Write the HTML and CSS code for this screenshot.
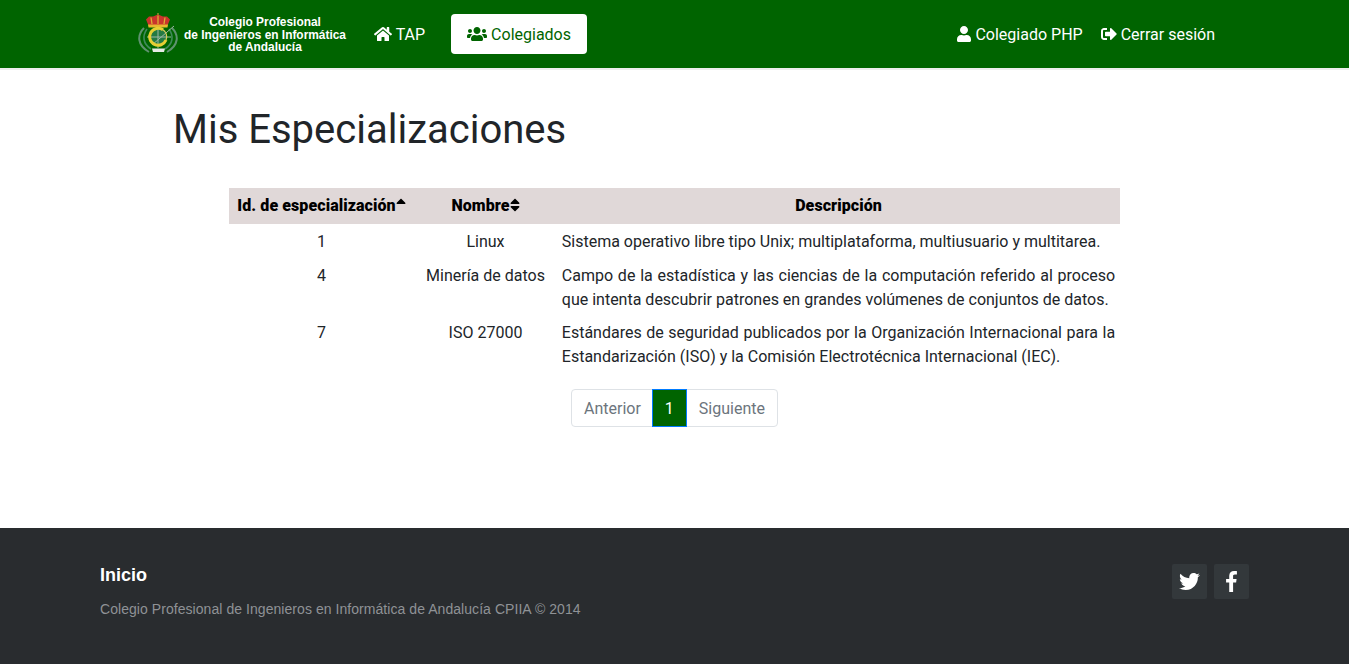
FILE: index.html
```html
<!DOCTYPE html>
<html lang="es">
<head>
<meta charset="utf-8">
<title>Mis Especializaciones</title>
<link rel="stylesheet" href="styles.css">
</head>
<body>
<header class="topbar">
  <div class="topbar-inner">
    <a class="brand" href="#">
      <svg class="crest" viewBox="0 0 40 42" aria-hidden="true">
        <g fill="none" stroke="#5f9270" stroke-width="2">
          <path d="M6 15C-1 22 -1 32 11 39"/>
          <path d="M34 15C41 22 41 32 29 39"/>
        </g>
        <g fill="none" stroke="#3f8a5a" stroke-width="1.600">
          <path d="M9 16C4 23 5 31 13 36"/>
          <path d="M31 16C36 23 35 31 27 36"/>
        </g>
        <path d="M19.500 0h1v2h-1z" fill="#d8b64a"/>
        <path d="M10.500 12.500 8 6.500 11 3.500 15 3.500 20 1.500 25 3.500 29 3.500 32 6.500 29.500 12.500Z" fill="#c9342c"/>
        <path d="M10 11.500H30L29.500 14.500H10.500Z" fill="#e8b82e"/>
        <path d="M13 4.500 14 11M20 2.500V11M27 4.500 26 11" stroke="#dcae34" stroke-width="1.300"/>
        <circle cx="20" cy="24" r="9.500" fill="#247a42"/>
        <path d="M9 24H33M20 14V35M14 32 36 13" stroke="#9db6a4" stroke-width="1"/>
        <path d="M25 16.800A8.500 8.500 0 1 0 28 27" fill="none" stroke="#e6cf33" stroke-width="3"/>
        <path d="M25 16.800A8.500 8.500 0 0 1 28 27" fill="none" stroke="#d7cf55" stroke-width="1.300"/>
        <path d="M14 35.500H27L26 39H15Z" fill="#e7ebe6"/>
      </svg>
      <span class="brand-text">Colegio Profesional<br>de Ingenieros en Informática<br>de Andalucía</span>
    </a>
    <nav class="nav nav-main">
      <a class="nav-link" href="#">
        <svg class="ico ico-home" viewBox="0 0 576 512"><path d="M280.37 148.26L96 300.11V464a16 16 0 0 0 16 16l112.06-.29a16 16 0 0 0 15.92-16V368a16 16 0 0 1 16-16h64a16 16 0 0 1 16 16v95.64a16 16 0 0 0 16 16.05L464 480a16 16 0 0 0 16-16V300L295.67 148.26a12.19 12.19 0 0 0-15.3 0zM571.6 251.47L488 182.56V44.05a12 12 0 0 0-12-12h-56a12 12 0 0 0-12 12v72.61L318.47 43a48 48 0 0 0-61 0L4.34 251.47a12 12 0 0 0-1.6 16.9l25.5 31A12 12 0 0 0 45.15 301l235.22-193.74a12.19 12.19 0 0 1 15.3 0L530.9 301a12 12 0 0 0 16.9-1.6l25.5-31a12 12 0 0 0-1.7-16.93z"/></svg>
        TAP
      </a>
      <a class="nav-link is-active" href="#">
        <svg class="ico ico-users" viewBox="0 0 640 512"><path d="M96 224c35.3 0 64-28.7 64-64s-28.7-64-64-64-64 28.7-64 64 28.7 64 64 64zm448 0c35.3 0 64-28.7 64-64s-28.7-64-64-64-64 28.7-64 64 28.7 64 64 64zm32 32h-64c-17.6 0-33.5 7.1-45.1 18.6 40.3 22.1 68.9 62 75.1 109.4h66c17.7 0 32-14.3 32-32v-32c0-35.3-28.7-64-64-64zm-256 0c61.9 0 112-50.1 112-112S381.9 32 320 32 208 82.1 208 144s50.1 112 112 112zm76.8 32h-8.3c-20.8 10-43.9 16-68.5 16s-47.6-6-68.5-16h-8.3C179.6 288 128 339.6 128 403.2V432c0 26.5 21.5 48 48 48h288c26.5 0 48-21.5 48-48v-28.8c0-63.6-51.6-115.2-115.2-115.2zm-223.7-13.4C161.5 263.1 145.6 256 128 256H64c-35.3 0-64 28.7-64 64v32c0 17.7 14.3 32 32 32h65.900c6.300-47.400 34.900-87.300 75.200-109.400z"/></svg>
        Colegiados
      </a>
    </nav>
    <nav class="nav nav-user">
      <a class="nav-link" href="#">
        <svg class="ico ico-user" viewBox="0 0 448 512"><path d="M224 256c70.700 0 128-57.300 128-128S294.700 0 224 0 96 57.300 96 128s57.300 128 128 128zm89.600 32h-16.700c-22.200 10.200-46.900 16-72.900 16s-50.600-5.800-72.900-16h-16.700C60.200 288 0 348.200 0 422.400V464c0 26.500 21.500 48 48 48h352c26.500 0 48-21.500 48-48v-41.600c0-74.200-60.200-134.400-134.400-134.400z"/></svg>
        Colegiado PHP
      </a>
      <a class="nav-link" href="#">
        <svg class="ico ico-out" viewBox="0 0 512 512"><path d="M497 273L329 441c-15 15-41 4.500-41-17v-96H152c-13.300 0-24-10.700-24-24v-96c0-13.300 10.700-24 24-24h136V88c0-21.400 25.900-32 41-17l168 168c9.300 9.400 9.300 24.600 0 34zM192 436v-40c0-6.600-5.400-12-12-12H96c-17.700 0-32-14.300-32-32V160c0-17.700 14.300-32 32-32h84c6.600 0 12-5.400 12-12V76c0-6.600-5.400-12-12-12H96c-53 0-96 43-96 96v192c0 53 43 96 96 96h84c6.600 0 12-5.400 12-12z"/></svg>
        Cerrar sesión
      </a>
    </nav>
  </div>
</header>

<main class="content">
  <h1 class="page-title">Mis Especializaciones</h1>
  <table class="data-table">
    <colgroup>
      <col class="col-id"><col class="col-name"><col class="col-desc">
    </colgroup>
    <thead>
      <tr>
        <th>Id. de especialización<svg class="sort" viewBox="0 0 320 512"><path d="M279 224H41c-21.400 0-32.100-25.900-17-41L143 64c9.400-9.400 24.600-9.400 33.900 0l119 119c15.200 15.100 4.500 41-16.900 41z"/></svg></th>
        <th>Nombre<svg class="sort" viewBox="0 0 320 512"><path d="M41 288h238c21.400 0 32.100 25.900 17 41l-119 119c-9.400 9.400-24.600 9.400-33.900 0l-119.100-119c-15.100-15.100-4.400-41 17-41zm255-105L177 64c-9.400-9.400-24.600-9.400-33.900 0L24 183c-15.100 15.100-4.400 41 17 41h238c21.400 0 32.100-25.900 17-41z"/></svg></th>
        <th>Descripción</th>
      </tr>
    </thead>
    <tbody>
      <tr>
        <td class="center">1</td>
        <td class="center">Linux</td>
        <td class="just">Sistema operativo libre tipo Unix; multiplataforma, multiusuario y multitarea.</td>
      </tr>
      <tr>
        <td class="center">4</td>
        <td class="center">Minería de datos</td>
        <td class="just">Campo de la estadística y las ciencias de la computación referido al proceso que intenta descubrir patrones en grandes volúmenes de conjuntos de datos.</td>
      </tr>
      <tr>
        <td class="center">7</td>
        <td class="center">ISO 27000</td>
        <td class="just">Estándares de seguridad publicados por la Organización Internacional para la Estandarización (ISO) y la Comisión Electrotécnica Internacional (IEC).</td>
      </tr>
    </tbody>
  </table>
  <div class="pagination">
    <a class="page-link first" href="#">Anterior</a>
    <a class="page-link current" href="#">1</a>
    <a class="page-link last" href="#">Siguiente</a>
  </div>
</main>

<footer class="footer">
  <div class="footer-left">
    <a class="footer-link" href="#">Inicio</a>
    <p class="footer-copy">Colegio Profesional de Ingenieros en Informática de Andalucía CPIIA © 2014</p>
  </div>
  <div class="footer-social">
    <a class="social" href="#"><svg class="ico-tw" viewBox="0 0 512 512"><path d="M459.37 151.716c.325 4.548.325 9.097.325 13.645 0 138.72-105.583 298.558-298.558 298.558-59.452 0-114.68-17.219-161.137-47.106 8.447.974 16.568 1.299 25.34 1.299 49.055 0 94.213-16.568 130.274-44.832-46.132-.975-84.792-31.188-98.112-72.772 6.498.974 12.995 1.624 19.818 1.624 9.421 0 18.843-1.3 27.614-3.573-48.081-9.747-84.143-51.98-84.143-102.985v-1.299c13.969 7.797 30.214 12.67 47.431 13.319-28.264-18.843-46.781-51.005-46.781-87.391 0-19.492 5.197-37.36 14.294-52.954 51.655 63.675 129.3 105.258 216.365 109.807-1.624-7.797-2.599-15.918-2.599-24.04 0-57.828 46.782-104.934 104.934-104.934 30.213 0 57.502 12.67 76.67 33.137 23.715-4.548 46.456-13.32 66.599-25.34-7.798 24.366-24.366 44.833-46.132 57.827 21.117-2.273 41.584-8.122 60.426-16.243-14.292 20.791-32.161 39.308-52.628 54.253z"/></svg></a>
    <a class="social" href="#"><svg class="ico-fb" viewBox="0 0 264 512"><path d="M76.700 512V283H0v-91h76.700v-71.700C76.700 42.400 124.300 0 193.800 0c33.300 0 61.900 2.500 70.200 3.600V85h-48.200c-37.800 0-45.100 18-45.100 44.300V192H256l-11.700 91h-73.600v229"/></svg></a>
  </div>
</footer>
</body>
</html>
```

FILE: styles.css
```css
* { box-sizing: border-box; }

html, body { margin: 0; height: 100%; }

body {
  display: flex;
  flex-direction: column;
  min-height: 664px;
  font-family: Roboto, "Liberation Sans", sans-serif;
  font-size: 16px;
  line-height: 24px;
  color: #212529;
  background: #fff;
  overflow-x: hidden;
}

a { text-decoration: none; }

.topbar {
  flex: none;
  height: 70px;
  background: #006400;
  border-bottom: 2px solid #eeeeee;
}

.topbar-inner {
  display: flex;
  align-items: center;
  height: 68px;
  padding: 0 126px 0 138px;
}

.brand {
  display: flex;
  align-items: center;
  gap: 6px;
  color: #fff;
  margin-right: 12px;
}

.crest { width: 40px; height: 42px; flex: none; }

.brand-text {
  width: 162px;
  padding-top: 2px;
  font-family: "Liberation Sans", Arial, sans-serif;
  font-size: 11.9px;
  line-height: 12.4px;
  font-weight: 700;
  text-align: center;
  white-space: nowrap;
}

.nav { display: flex; align-items: center; }
.nav-main { gap: 10px; }
.nav-user { margin-left: auto; gap: 2px; }
.nav-user .nav-link { padding-left: 8px; padding-right: 8px; }

.nav-link {
  display: block;
  height: 40px;
  padding: 9px 16px 7px;
  color: #fff;
  border-radius: 4px;
  white-space: nowrap;
}

.nav-link.is-active { background: #fff; color: #006400; }

.ico { fill: currentColor; height: 16px; vertical-align: -2px; }
.ico-home { width: 18px; }
.ico-users { width: 20px; }
.ico-user { width: 14px; }
.ico-out { width: 16px; }

.content { flex: 1; padding: 0 229px; }

.page-title {
  margin: 33px 0 31px -56px;
  font-size: 40px;
  line-height: 54px;
  font-weight: 400;
}

.data-table {
  width: 891px;
  border-collapse: collapse;
  table-layout: fixed;
}

.col-id { width: 185px; }
.col-name { width: 143px; }

.data-table th {
  height: 36px;
  padding: 4.8px;
  background: #e0d8d8;
  color: #000;
  font-weight: 900;
  letter-spacing: .08px;
  text-align: center;
  white-space: nowrap;
}

.data-table td {
  padding: 4.8px;
  vertical-align: top;
}

.data-table tbody tr:first-child td { padding-top: 6px; }

.data-table td.center { text-align: center; }
.data-table td.just { text-align: justify; }

.sort { width: 10px; height: 16px; fill: #000; vertical-align: -2px; }

.pagination {
  display: flex;
  justify-content: center;
  margin-top: 15px;
  padding-left: 1px;
}

.page-link {
  height: 38px;
  padding: 7px 12px 5px;
  margin-left: -1px;
  border: 1px solid #dee2e6;
  background: #fff;
  color: #6c757d;
}

.page-link.first { border-radius: 4px 0 0 4px; padding-right: 11px; }
.page-link.last { border-radius: 0 4px 4px 0; }

.page-link.current {
  position: relative;
  background: #006400;
  border-color: #007bff;
  color: #fff;
}

.footer {
  flex: none;
  display: flex;
  justify-content: space-between;
  height: 136px;
  padding: 36px 100px;
  background: #292c2f;
  font-family: "Liberation Sans", Arial, sans-serif;
}

.footer-link {
  display: block;
  color: #fff;
  font-size: 18px;
  font-weight: 700;
  line-height: 22px;
}

.footer-copy {
  margin: 13px 0 0;
  color: #8f9296;
  font-size: 14px;
  letter-spacing: .055px;
  line-height: 20px;
}

.footer-social { display: flex; gap: 7px; }

.social {
  display: flex;
  align-items: center;
  justify-content: center;
  width: 35px;
  height: 35px;
  border-radius: 2px;
  background: #33383b;
  fill: #fff;
}

.ico-tw { width: 21px; height: 21px; }
.ico-fb { width: 11px; height: 21px; }
```
